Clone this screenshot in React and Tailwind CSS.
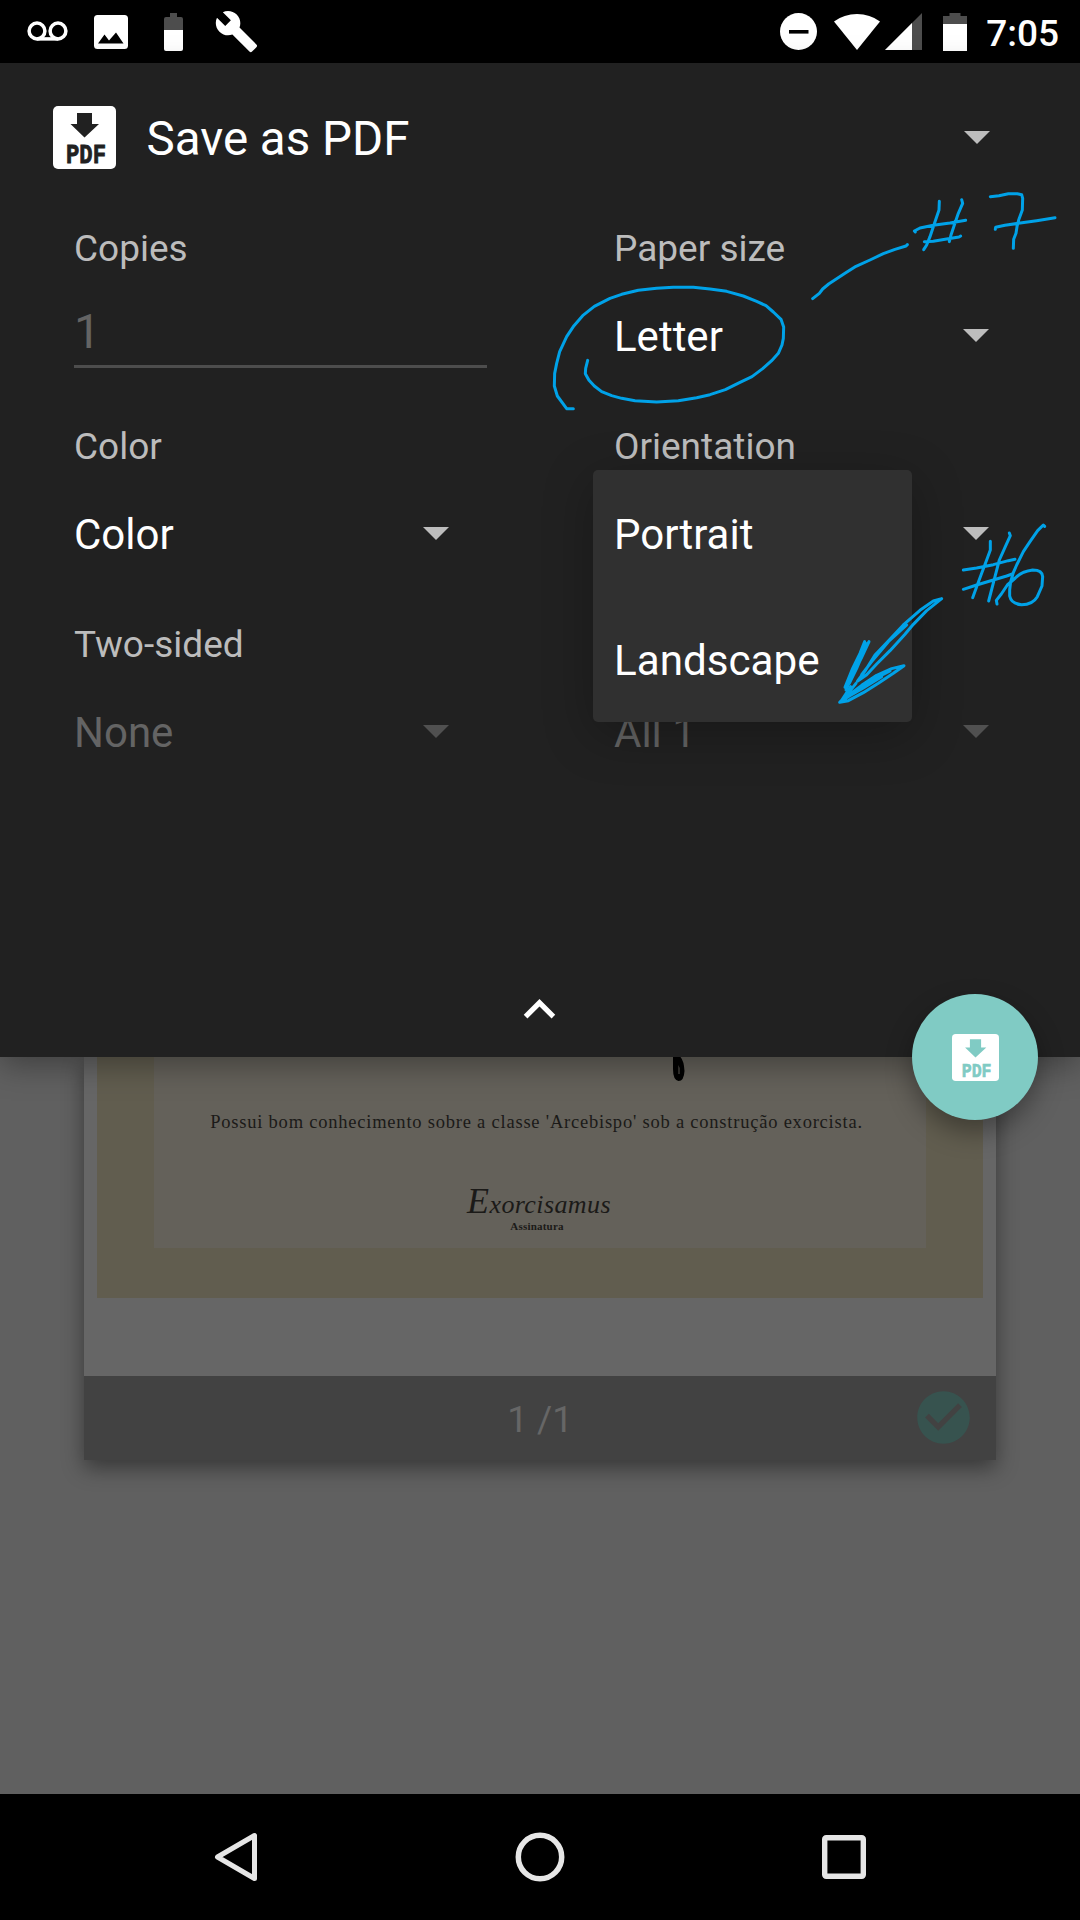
import React from "react";
import { MdCheckCircle, MdBuild } from "react-icons/md";

function Caret({ className = "" }) {
  return (
    <svg viewBox="0 0 26 13" className={`h-[13px] w-[26px] ${className}`} fill="currentColor">
      <path d="M0 0h26L13 13z" />
    </svg>
  );
}

function PdfIcon({ className, ink }) {
  return (
    <svg viewBox="0 0 63 63" className={`overflow-visible ${className}`}>
      <rect width="63" height="63" rx="5" fill="#fff" />
      <path d="M24 7h15v11h7L31.500 31.500 17.500 18H24z" fill={ink} />
      <text
        x="13"
        y="57"
        fill={ink}
        fontFamily="Liberation Mono, monospace"
        fontWeight="700"
        fontSize="27"
        stroke={ink}
        strokeWidth="0.8"
        textLength="40"
        lengthAdjust="spacingAndGlyphs"
      >
        PDF
      </text>
    </svg>
  );
}

function StatusBar() {
  return (
    <header className="flex h-[63px] shrink-0 items-center justify-between bg-black pl-[27px] pr-[21px] text-white">
      <div className="flex items-center">
        <svg viewBox="0 0 41 20" className="h-[20px] w-[41px] -translate-y-px" fill="none" stroke="#fff" strokeWidth="3.500">
          <circle cx="10" cy="10" r="7.900" />
          <circle cx="31" cy="10" r="7.900" />
          <path d="M10 17.900h21" />
        </svg>
        <svg viewBox="0 0 34 34" className="ml-[26px] h-[34px] w-[34px]">
          <path
            fillRule="evenodd"
            fill="#fff"
            d="M3.500 0h27Q34 0 34 3.500v27Q34 34 30.500 34h-27Q0 34 0 30.500v-27Q0 0 3.500 0zM4 28.500h25.500L22 17.500l-7 8-4.500-6z"
          />
        </svg>
        <svg viewBox="0 0 19 38" className="ml-[36px] h-[38px] w-[19px]">
          <path d="M0 17V6q0-2 2-2h4V0h7v4h4q2 0 2 2v11z" fill="#4d4d4d" />
          <path d="M0 17h19v19q0 2-2 2H2q-2 0-2-2z" fill="#fff" />
        </svg>
        <MdBuild className="ml-[31px] h-[45px] w-[45px]" />
      </div>
      <div className="flex items-center">
        <svg viewBox="0 0 37 37" className="h-[37px] w-[37px]">
          <circle cx="18.500" cy="18.500" r="18.500" fill="#fff" />
          <path d="M9 17h19.500v3.600H9z" fill="#000" />
        </svg>
        <svg viewBox="0 0 46 36" className="ml-[17px] h-[36px] w-[46px]">
          <path d="M23 36 0 7.500Q10 0 23 0t23 7.500z" fill="#fff" />
        </svg>
        <svg viewBox="0 0 37 37" className="ml-[5px] h-[37px] w-[37px]">
          <path d="M37 0v37H0z" fill="#4d4d4d" />
          <path d="M27 10v27H0z" fill="#fff" />
        </svg>
        <svg viewBox="0 0 24 38" className="ml-[21px] h-[38px] w-[24px]">
          <path d="M0 11V3h6.500V0h11v3H24v8z" fill="#4d4d4d" />
          <path d="M0 11h24v27H0z" fill="#fff" />
        </svg>
        <span className="ml-[19px] translate-y-[1.5px] text-[37px] font-medium leading-[63px]">7:05</span>
      </div>
    </header>
  );
}

function Option({ label, value, disabled }) {
  return (
    <div className="h-[198px] pt-[9px] pl-[74px]">
      <div className="h-[49px] text-[37px] leading-[49px] text-[#bcbcbc]">{label}</div>
      <div className="mt-8 flex h-[63px] items-center justify-between pr-[91.5px]">
        <span className={`text-[42px] leading-[63px] ${disabled ? "text-[#646464]" : "text-white"}`}>{value}</span>
        <Caret className={disabled ? "-translate-y-px text-[#505050]" : "-translate-y-px text-[#bdbdbd]"} />
      </div>
    </div>
  );
}

function Copies() {
  return (
    <div className="h-[198px] pt-[9px] pl-[74px]">
      <div className="text-[37px] leading-[49px] text-[#bcbcbc]">Copies</div>
      <div className="mt-[27px] h-[68px] w-[413px] border-b-[3px] border-[#4d4d4d] text-[47.25px] leading-[65px] text-[#646464]">1</div>
    </div>
  );
}

function PrintPanel() {
  return (
    <section className="relative z-10 flex h-[994px] shrink-0 flex-col bg-[#212121] shadow-[0_8px_30px_rgba(0,0,0,0.35)]">
      <div className="flex h-[152px] items-center pl-[52.5px] pr-[90.5px]">
        <PdfIcon className="mt-[-4px] h-[63px] w-[63px]" ink="#212121" />
        <span className="ml-[31px] flex-1 text-[47.5px] leading-[60px] text-white">Save as PDF</span>
        <Caret className="-translate-y-[2px] text-[#bdbdbd]" />
      </div>
      <div className="grid grid-cols-2">
        <Copies />
        <Option label="Paper size" value="Letter" />
        <Option label="Color" value="Color" />
        <Option label="Orientation" value="" />
        <Option label="Two-sided" value="None" disabled />
        <Option label="" value="All 1" disabled />
      </div>
      <div className="mt-auto flex h-[79px] justify-center pr-[2px]">
        <svg viewBox="0 0 24 24" className="h-[63px] w-[63px] fill-white">
          <path d="M12 8l-6 6 1.410 1.410L12 10.830l4.590 4.580L18 14z" />
        </svg>
      </div>
      <ul className="absolute left-[593px] top-[407px] h-[252px] w-[319px] rounded-[5px] bg-[#303030] pl-[21px] text-[42px] leading-[126px] text-white shadow-[0_12px_50px_rgba(0,0,0,0.28)]">
        <li className="h-[126px] pt-[2px]">Portrait</li>
        <li className="h-[126px] pt-[2px] text-[42.2px]">Landscape</li>
      </ul>
      <button className="absolute left-[912px] top-[931px] flex h-[126px] w-[126px] items-center justify-center rounded-full bg-[#80cbc4] shadow-[0_12px_26px_rgba(0,0,0,0.35)]">
        <PdfIcon className="h-[47px] w-[47px]" ink="#80cbc4" />
      </button>
    </section>
  );
}

function Preview() {
  return (
    <main className="h-[737px] shrink-0 bg-[#606060] px-[84px]">
      <article className="h-[403px] bg-[#666666] shadow-[0_8px_20px_rgba(0,0,0,0.42)]">
        <div className="h-[319px] px-[13px]">
          <div className="h-[241px] bg-[#615d4f] px-[57px]">
            <div className="h-[191px] bg-[#64615a] text-center text-[#1b1a18]">
              <div className="flex h-[52px] justify-center">
                <svg viewBox="0 0 12 24" className="ml-[278px] h-[24px] w-[12px]">
                  <path
                    fillRule="evenodd"
                    d="M0 0h7.500Q11 4 11.500 14 11 24 5.500 24 0 23 0 12zM5.500 8v9h1V11z"
                    fill="#000"
                  />
                </svg>
              </div>
              <p className="whitespace-nowrap pr-[7px] font-['Liberation_Serif',serif] text-[18.5px] leading-[26px] tracking-[0.78px]">
                Possui bom conhecimento sobre a classe 'Arcebispo' sob a construção exorcista.
              </p>
              <p className="mt-[51px] h-[34px] pr-[2px] font-['Liberation_Serif',serif] text-[26px] italic leading-[36px] tracking-[0.4px]">
                <span className="text-[36px] leading-[30px]">E</span>xorcisamus
              </p>
              <p className="pr-[6px] font-['Liberation_Serif',serif] text-[11px] font-bold leading-[12px] tracking-[0.2px]">Assinatura</p>
            </div>
          </div>
        </div>
        <footer className="flex h-[84px] items-center bg-[#424242] pr-[21px] pl-[84px]">
          <span className="flex-1 translate-y-[2px] text-center text-[36.75px] leading-[84px] text-[#666666]">1 /1</span>
          <MdCheckCircle className="h-[63px] w-[63px] -translate-y-px text-[#37534f]" />
        </footer>
      </article>
    </main>
  );
}

function NavBar() {
  return (
    <nav className="flex h-[126px] shrink-0 items-center justify-between bg-black pl-[213px] pr-[213px]">
      <svg viewBox="0 0 46 50" className="h-[50px] w-[46px]" fill="none" stroke="#e6e6e6" strokeWidth="5" strokeLinejoin="round">
        <path d="M41.500 3.500v43L4.500 25z" />
      </svg>
      <svg viewBox="0 0 50 50" className="h-[50px] w-[50px]" fill="none" stroke="#e6e6e6" strokeWidth="5.500">
        <circle cx="25" cy="25" r="21.700" />
      </svg>
      <svg viewBox="0 0 46 46" className="h-[46px] w-[46px]" fill="none" stroke="#e6e6e6" strokeWidth="5.400">
        <rect x="3.700" y="3.700" width="38.600" height="38.600" rx="1.500" />
      </svg>
    </nav>
  );
}

// Freehand pen marks drawn over the print sheet.
function PenMarks() {
  return (
    <svg
      viewBox="0 0 1080 1920"
      className="pointer-events-none absolute inset-0 z-20 h-[1920px] w-[1080px]"
      fill="none"
      stroke="#00a2e8"
      strokeLinecap="round"
      strokeLinejoin="round"
    >
      <g transform="translate(540 230) scale(.33333)" strokeWidth="9">
        <path d="M100 536H80L52 498 43 468 44 430 50 400 59 365 80 320 102 287 128 257 163 229 210 205 245 193 295 181 350 175 400 172H460L510 177 560 184 610 198 650 214 678 227 700 246 723 268 731 291 730 325 726 345 715 370 695 392 668 416 636 440 600 457 556 479 510 494 470 503 415 512 350 516 285 512 245 505 215 497 185 485 163 468 147 451 136 431 137 415 143 391" />
      </g>
      <g transform="translate(700 0) scale(.33333)" strokeWidth="9">
        <path d="M338 896 358 880 368 867 386 852 435 820 468 799 510 780 550 761 585 748 618 738 622 734" />
        <path d="M718 604 717 630 705 665 690 710 680 735 671 749M785 599 788 610 775 640 763 675 753 705 748 725M646 696 643 693 660 684 700 676 750 669 797 661M673 725 700 724 740 717 777 711 782 708" />
        <path d="M871 590 897 587 925 581H952L965 584 968 595 967 630 956 660 951 680 948 700 941 718 940 745M886 688 887 682 915 676 955 670 1010 662 1065 653" />
      </g>
      <g transform="translate(580 450) scale(.33333)" strokeWidth="9">
        <path d="M1231 274V300L1220 330 1205 370 1190 410 1178 443M1288 249 1291 257 1275 292 1258 330 1245 380 1226 453M1150 360 1190 354 1240 344 1285 332 1305 328M1150 418 1190 405 1240 390 1280 378 1297 372" />
        <path d="M1394 229 1390 225 1373 242 1350 275 1330 305 1310 345 1300 368 1292 395 1289 420V438Q1294 462 1325 464 1358 464 1372 440L1386 408 1388 380Q1387 360 1358 360 1325 364 1306 384L1282 405 1264 432 1249 451 1251 462" />
        <path d="M1085 446 1060 453 1020 481 970 525 920 578 885 615 857 660 832 694 860 674 890 642 930 602 975 553 1000 523 1040 482 1085 446M980 525 925 575 875 635 845 674" />
        <path d="M854 575 840 610 818 655 795 712 808 700 830 655 850 608 867 575 845 622 820 672 798 720M857 580 812 674" />
        <path d="M828 700 806 728 788 748 779 757 805 752 850 728 895 700 940 670 972 647 935 656 890 676 845 706 785 751 812 710M785 752 828 726 880 688 930 663M795 745 850 714 905 680M825 728 875 697" />
      </g>
    </svg>
  );
}

export default function App() {
  return (
    <div className="relative flex h-[1920px] w-[1080px] flex-col overflow-hidden bg-black font-['Roboto',sans-serif]">
      <StatusBar />
      <PrintPanel />
      <Preview />
      <NavBar />
      <PenMarks />
    </div>
  );
}
